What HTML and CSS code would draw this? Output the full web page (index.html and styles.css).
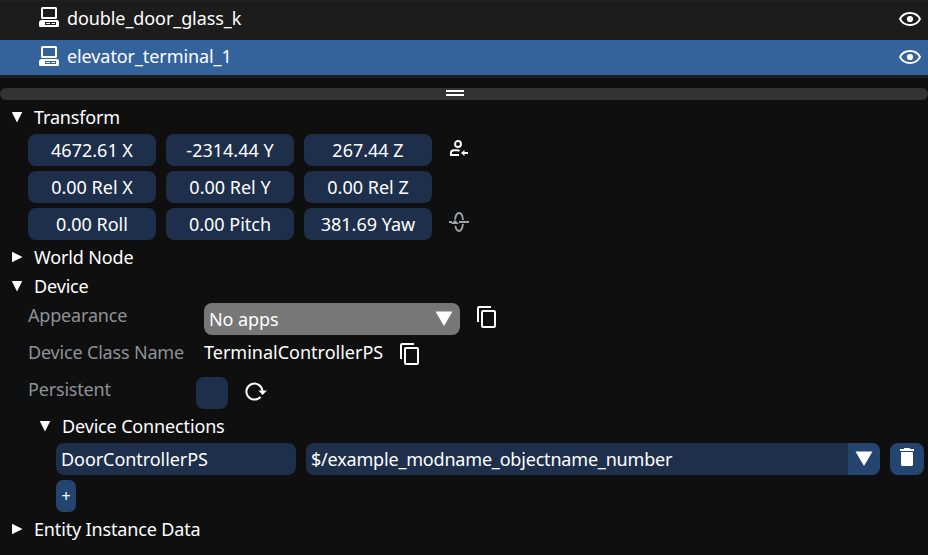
FILE: index.html
```html
<!DOCTYPE html>
<html lang="en">
<head>
<meta charset="utf-8">
<title>Object inspector</title>
<link rel="stylesheet" href="styles.css">
</head>
<body>
<svg class="defs" width="0" height="0">
  <symbol id="computer" viewBox="0 0 20 20">
    <path fill="currentColor" fill-rule="evenodd" d="M3.500 0H16.500Q18 0 18 1.500V10.500Q18 12 16.500 12H3.500Q2 12 2 10.500V1.500Q2 0 3.500 0ZM4 2V10H16V2ZM2 13H18.500Q20 13.500 20 15.500V18.500Q20 20 18.500 20H1.500Q0 20 0 18.500V15.500Q0 13.500 2 13ZM6 15V18H17V15ZM7 16H11V17H7ZM12.500 16H16V17H12.500Z"/>
  </symbol>
  <symbol id="eye" viewBox="0 0 22 14">
    <path fill="none" stroke="currentColor" stroke-width="1.8" d="M1 7C3 3 6.500 1 11 1S19 3 21 7C19 11 15.500 13 11 13S3 11 1 7Z"/>
    <circle cx="11" cy="7" r="3.100" fill="currentColor"/>
  </symbol>
  <symbol id="copy" viewBox="0 0 20 22">
    <path fill="none" stroke="currentColor" stroke-width="2" d="M14 1H2Q1 1 1 2V16M6 5H17Q18 5 18 6V20Q18 21 17 21H6Q5 21 5 20V6Q5 5 6 5Z"/>
  </symbol>
  <symbol id="down" viewBox="0 0 18 15"><path fill="currentColor" d="M.5 .5H17.500L9 15Z"/></symbol>
</svg>

<ul class="tree">
  <li class="node"><svg class="node-icon"><use href="#computer"/></svg><span class="node-name">double_door_glass_k</span><svg class="eye"><use href="#eye"/></svg></li>
  <li class="node selected"><svg class="node-icon"><use href="#computer"/></svg><span class="node-name">elevator_terminal_1</span><svg class="eye"><use href="#eye"/></svg></li>
</ul>
<div class="splitter"><span class="grip"></span></div>

<main class="inspector">
  <div class="heading open">Transform</div>
  <div class="vector">
    <span class="field">4672.61 X</span><span class="field">-2314.44 Y</span><span class="field">267.44 Z</span>
    <svg class="person" viewBox="0 0 20 18" width="20" height="18">
      <g fill="none" stroke="#fff" stroke-width="1.900"><circle cx="9" cy="5" r="3"/><path d="M10 16H2V13.800Q2 11.200 5 11.200H8Q9.500 11.200 10.500 12"/><path d="M14 14H19"/></g>
      <path fill="#fff" d="M15.500 11V17L12 14Z"/>
    </svg>
  </div>
  <div class="vector">
    <span class="field">0.00 Rel X</span><span class="field">0.00 Rel Y</span><span class="field">0.00 Rel Z</span>
  </div>
  <div class="vector">
    <span class="field">0.00 Roll</span><span class="field">0.00 Pitch</span><span class="field">381.69 Yaw</span>
    <svg class="rotate" viewBox="0 0 20 20" width="20" height="20">
      <g fill="none" stroke="#a0a3a6" stroke-width="1.800"><path d="M6 7.500Q7 1 10 1Q13.500 1 14 8M14 12Q13 19 10 19Q7.500 19 6.300 14"/><path d="M0 10H3M10 10H20"/></g>
      <path fill="#a0a3a6" d="M2 12L6 8L10 12Z"/>
    </svg>
  </div>
  <div class="heading">World Node</div>
  <div class="heading open">Device</div>
  <div class="property">
    <span class="label">Appearance</span>
    <span class="select">No apps<svg class="down"><use href="#down"/></svg></span>
    <svg class="copy"><use href="#copy"/></svg>
  </div>
  <div class="property">
    <span class="label">Device Class Name</span>
    <span class="value">TerminalControllerPS</span>
    <svg class="copy"><use href="#copy"/></svg>
  </div>
  <div class="property">
    <span class="label short">Persistent</span>
    <span class="checkbox"></span>
    <svg class="reset" viewBox="0 0 22 20" width="22" height="20">
      <path fill="none" stroke="#fff" stroke-width="2" d="M15.500 15.800A8 8 0 1 1 17.400 10"/>
      <path fill="#fff" d="M13.500 9.500H22L17.500 14Z"/>
    </svg>
  </div>
  <div class="heading open nested">Device Connections</div>
  <div class="connection">
    <span class="field class-name">DoorControllerPS</span>
    <span class="combo"><span class="reference">$/example_modname_objectname_number</span><span class="combo-button"><svg class="down"><use href="#down"/></svg></span></span>
    <span class="delete"><svg viewBox="0 0 14 18" width="14" height="18"><path fill="#fff" d="M4 0H10V1H14V3H0V1H4ZM1 4H13V16.500Q13 18 11.500 18H2.500Q1 18 1 16.500Z"/></svg></span>
  </div>
  <div class="connection"><span class="add">+</span></div>
  <div class="heading">Entity Instance Data</div>
</main>
</body>
</html>
```

FILE: styles.css
```css
* { box-sizing: border-box; }
body {
  margin: 0;
  height: 555px;
  overflow: hidden;
  background: #0f0f0f;
  color: #fff;
  font: 18px/24px "Noto Sans", sans-serif;
  white-space: nowrap;
}
svg { display: block; flex: none; }
.defs { position: absolute; }
.tree {
  margin: 0;
  padding: 0;
  list-style: none;
  height: 78px;
  background: #1c1c1c;
  border-top: 1px solid #222;
  border-bottom: 3px solid #202020;
}
.node {
  display: flex;
  align-items: flex-start;
  height: 39px;
  padding: 5px 7px 0 39px;
}
.node.selected { height: 35px; padding-top: 4px; background: #34639c; }
.node-icon { width: 20px; height: 20px; margin: 1px 8px 0 0; }
.selected .node-icon { margin-top: 2px; }
.node-name { flex: 1; letter-spacing: -0.09px; }
.eye { width: 22px; height: 14px; margin-top: 6px; }
.splitter {
  display: flex;
  justify-content: center;
  height: 12px;
  margin-top: 10px;
  padding: 2px 18px 0 0;
  border-radius: 6px;
  background: #333;
}
.grip { width: 18px; height: 6px; border: solid #fff; border-width: 2px 0; }
.inspector {
  display: flex;
  flex-direction: column;
  gap: 5px;
  padding: 5px 4px 0 28px;
}
.heading {
  display: flex;
  align-items: flex-start;
  height: 24px;
  margin-left: -16.5px;
  letter-spacing: -0.15px;
}
.heading::before {
  content: "";
  width: 11px;
  height: 11px;
  margin: 6.500px 11.500px 0 0;
  background: #fff;
  clip-path: polygon(0 0, 100% 50%, 0 100%);
}
.heading.open::before { clip-path: polygon(0 0, 100% 0, 50% 100%); }
.heading.nested { margin-left: 11.5px; }
.vector { display: flex; gap: 10px; height: 32px; }
.field {
  width: 128px;
  border-radius: 8px;
  background: #1e2f4b;
  line-height: 32px;
  text-align: center;
}
.person { margin: 5px 0 0 7px; }
.rotate { margin: 4px 0 0 7px; }
.property { display: flex; height: 32px; }
.label { width: 176px; color: #8e9296; letter-spacing: -0.18px; }
.label.short { width: 168px; }
.select {
  display: flex;
  justify-content: space-between;
  width: 256px;
  padding: 0 7px 0 5px;
  border-radius: 8px;
  background: #777;
  line-height: 32px;
  letter-spacing: -0.1px;
}
.down { width: 18px; height: 15px; margin-top: 8px; }
.copy { width: 20px; height: 22px; margin: 3px 0 0 17px; }
.checkbox { width: 32px; border-radius: 8px; background: #1e2f4b; }
.reset { margin: 4px 0 0 16.5px; }
.connection { display: flex; gap: 10px; height: 32px; margin-left: 28px; }
.class-name { width: 240px; padding-left: 5px; text-align: left; letter-spacing: -0.06px; }
.combo {
  display: flex;
  flex: 1;
  overflow: hidden;
  border-radius: 8px;
  background: #1e2f4b;
  line-height: 32px;
}
.reference { flex: 1; padding-left: 5px; letter-spacing: -0.19px; }
.combo-button { width: 32px; padding-left: 7px; background: #24456f; }
.delete {
  width: 34px;
  padding: 5px 0 0 10px;
  border-radius: 8px;
  background: #24456f;
}
.add {
  width: 20px;
  border-radius: 7px;
  background: #24456f;
  font-size: 16px;
  line-height: 33px;
  text-align: center;
}
```
